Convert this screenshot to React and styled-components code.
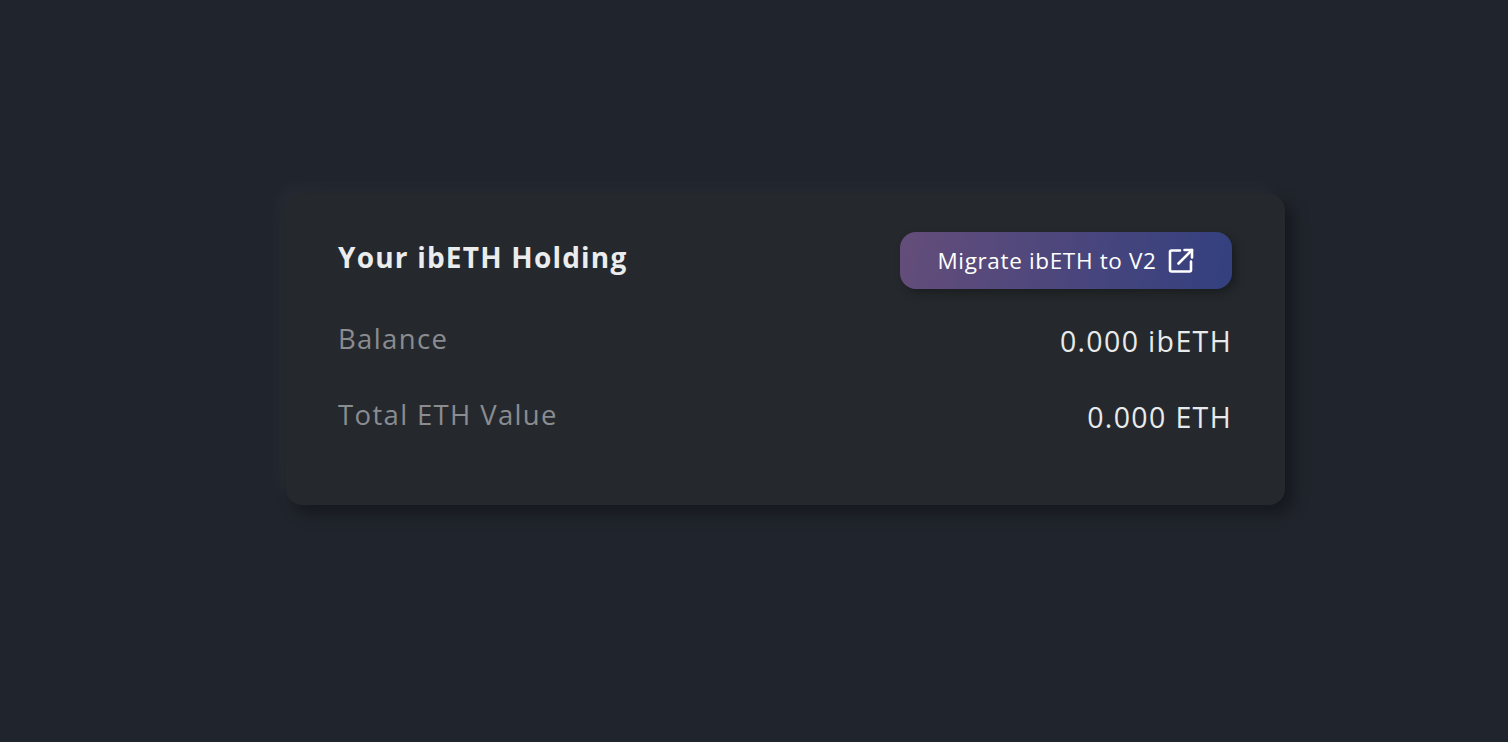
import styled, { createGlobalStyle } from 'styled-components'

const GlobalStyle = createGlobalStyle`
    html, body {
        margin: 0;
        background-color: #20242c;
    }
    body {
        font-family: "Open Sans", "Noto Sans", sans-serif;
    }
`
const Page = styled.div`
    display: flex;
    justify-content: center;
    align-items: flex-start;
    box-sizing: border-box;
    height: 742px;
    padding: 194px 0 0 63px;
    background-color: #20242c;
    overflow: hidden;
`
const Card = styled.section`
    box-sizing: border-box;
    width: 999px;
    height: 311px;
    padding: 38px 53px 0 52px;
    background-color: #25292d;
    border-radius: 16px;
    box-shadow: 8px 8px 16px rgba(0, 0, 0, 0.35), -8px -8px 16px rgba(255, 255, 255, 0.03);
`
const Row = styled.div`
    display: flex;
    justify-content: space-between;
    align-items: ${(p) => (p.$head ? 'flex-start' : 'center')};
    height: ${(p) => p.$height || 76}px;
`
const Title = styled.h2`
    margin: 7px 0 0;
    font-size: 28px;
    line-height: 36px;
    font-weight: 700;
    letter-spacing: 1.2px;
    color: #ebecee;
`
const Label = styled.span`
    font-size: 27.5px;
    line-height: 36px;
    letter-spacing: 1.35px;
    color: #8a8c90;
`
const Value = styled.span`
    font-size: 28.5px;
    font-weight: 500;
    line-height: 36px;
    margin-top: 4px;
    letter-spacing: 1.35px;
    color: #e9eaeb;
`
const MigrateButton = styled.a`
    display: flex;
    align-items: center;
    justify-content: center;
    gap: 10px;
    box-sizing: border-box;
    width: 332px;
    height: 57px;
    border-radius: 16px;
    background: linear-gradient(100deg, #644d7a 0%, #33407f 100%);
    box-shadow: 4px 4px 10px rgba(0, 0, 0, 0.3);
    color: #ffffff;
    font-size: 22.5px;
    font-weight: 500;
    letter-spacing: 0.65px;
    cursor: pointer;
`

function App() {
    return (
        <>
            <GlobalStyle />
            <Page>
                <Card>
                    <Row $head $height={69}>
                        <Title>Your ibETH Holding</Title>
                        <MigrateButton>
                            Migrate ibETH to V2
                            <svg width="28" height="28" viewBox="0 0 28 28" fill="none" stroke="#fff" strokeWidth="2.6" strokeLinecap="round" strokeLinejoin="round">
                                <path d="M13 3.500H4.500a1.500 1.500 0 0 0-1.500 1.500v18a1.500 1.500 0 0 0 1.500 1.500h18a1.500 1.500 0 0 0 1.500-1.500v-8.500" />
                                <path d="M11.500 16.500 25 3" />
                                <path d="M17.500 3H25v7.500" />
                            </svg>
                        </MigrateButton>
                    </Row>
                    <Row>
                        <Label>Balance</Label>
                        <Value>0.000 ibETH</Value>
                    </Row>
                    <Row>
                        <Label>Total ETH Value</Label>
                        <Value>0.000 ETH</Value>
                    </Row>
                </Card>
            </Page>
        </>
    )
}

export default App
